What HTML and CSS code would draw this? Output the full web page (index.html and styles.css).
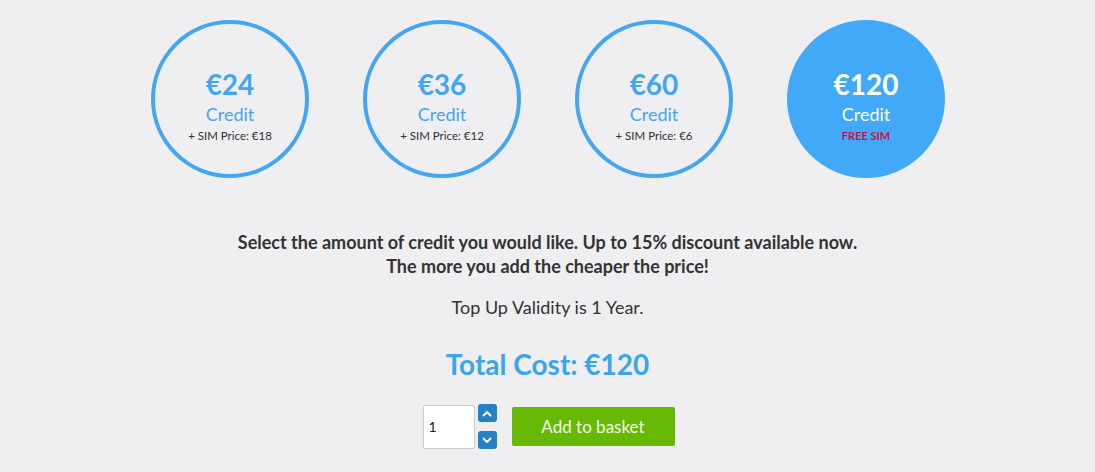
FILE: index.html
```html
<!DOCTYPE html>
<html lang="en">
<head>
<meta charset="utf-8">
<title>Top Up Credit</title>
<link rel="stylesheet" href="styles.css">
</head>
<body>
<main class="topup">
  <div class="options">
    <div class="option">
      <span class="amount">€24</span>
      <span class="label">Credit</span>
      <span class="sim">+ SIM Price: €18</span>
    </div>
    <div class="option">
      <span class="amount">€36</span>
      <span class="label">Credit</span>
      <span class="sim">+ SIM Price: €12</span>
    </div>
    <div class="option">
      <span class="amount">€60</span>
      <span class="label">Credit</span>
      <span class="sim">+ SIM Price: €6</span>
    </div>
    <div class="option selected">
      <span class="amount">€120</span>
      <span class="label">Credit</span>
      <span class="sim free">FREE SIM</span>
    </div>
  </div>
  <p class="intro">Select the amount of credit you would like. Up to 15% discount available now.<br>The more you add the cheaper the price!</p>
  <p class="validity">Top Up Validity is 1 Year.</p>
  <h2 class="total">Total Cost: €120</h2>
  <div class="buy">
    <div class="qty">
      <input class="qty-input" type="text" value="1">
      <div class="spin">
        <button class="spin-btn" aria-label="Increase"><svg width="10" height="7" viewBox="0 0 10 7"><path d="M1.5 5.5 L5 2 L8.5 5.5" fill="none" stroke="#fff" stroke-width="1.8" stroke-linecap="round" stroke-linejoin="round"/></svg></button>
        <button class="spin-btn" aria-label="Decrease"><svg width="10" height="7" viewBox="0 0 10 7"><path d="M1.5 1.5 L5 5 L8.5 1.5" fill="none" stroke="#fff" stroke-width="1.8" stroke-linecap="round" stroke-linejoin="round"/></svg></button>
      </div>
    </div>
    <button class="add">Add to basket</button>
  </div>
</main>
</body>
</html>
```
FILE: styles.css
```css
html, body {
  margin: 0;
  padding: 0;
}
body {
  background: #efeef0;
  font-family: Lato, "Open Sans", Arial, sans-serif;
  color: #333;
  width: 1095px;
  height: 472px;
  overflow: hidden;
}
.topup {
  display: flex;
  flex-direction: column;
  align-items: center;
  padding-top: 20px;
}
.options {
  display: flex;
  gap: 54px;
  margin-left: 1px;
}
.option {
  width: 158px;
  height: 158px;
  box-sizing: border-box;
  border: 4px solid #42a6f2;
  border-radius: 50%;
  display: flex;
  flex-direction: column;
  align-items: center;
  justify-content: center;
  color: #42a6f2;
  padding-top: 14px;
}
.option.selected {
  background: #42a9f8;
  border-color: #42a9f8;
  color: #fff;
}
.amount {
  font-size: 28px;
  font-weight: 700;
  line-height: 30px;
}
.label {
  font-size: 18px;
  line-height: 30px;
}
.sim {
  font-size: 11.5px;
  line-height: 14px;
  color: #333;
}
.sim.free {
  color: #d0103a;
  font-weight: 700;
  font-size: 11px;
}
.intro {
  margin: 52px 0 0;
  font-size: 18px;
  font-weight: 700;
  line-height: 24px;
  text-align: center;
  color: #333;
}
.validity {
  margin: 17px 0 0;
  font-size: 18px;
  line-height: 24px;
  color: #333;
}
.total {
  margin: 28px 0 0;
  font-size: 28px;
  font-weight: 700;
  line-height: 34px;
  color: #3aa6e8;
}
.buy {
  display: flex;
  align-items: center;
  margin-top: 23px;
  margin-left: 2px;
  gap: 15px;
}
.qty {
  display: flex;
  align-items: center;
  gap: 3px;
}
.qty-input {
  width: 52px;
  height: 44px;
  box-sizing: border-box;
  border: 1px solid #ccc;
  border-radius: 2px;
  background: #fff;
  font-family: Lato, Arial, sans-serif;
  font-size: 14px;
  padding: 0 5px;
  color: #222;
}
.spin {
  display: flex;
  flex-direction: column;
  gap: 9px;
}
.spin-btn {
  width: 19px;
  height: 18px;
  padding: 0;
  border: 0;
  border-radius: 3px;
  background: #2582c4;
  display: flex;
  align-items: center;
  justify-content: center;
}
.add {
  width: 163px;
  height: 39px;
  border: 0;
  border-radius: 2px;
  background: #68b905;
  color: #eef8e4;
  font-family: Lato, Arial, sans-serif;
  font-size: 17px;
}
```
